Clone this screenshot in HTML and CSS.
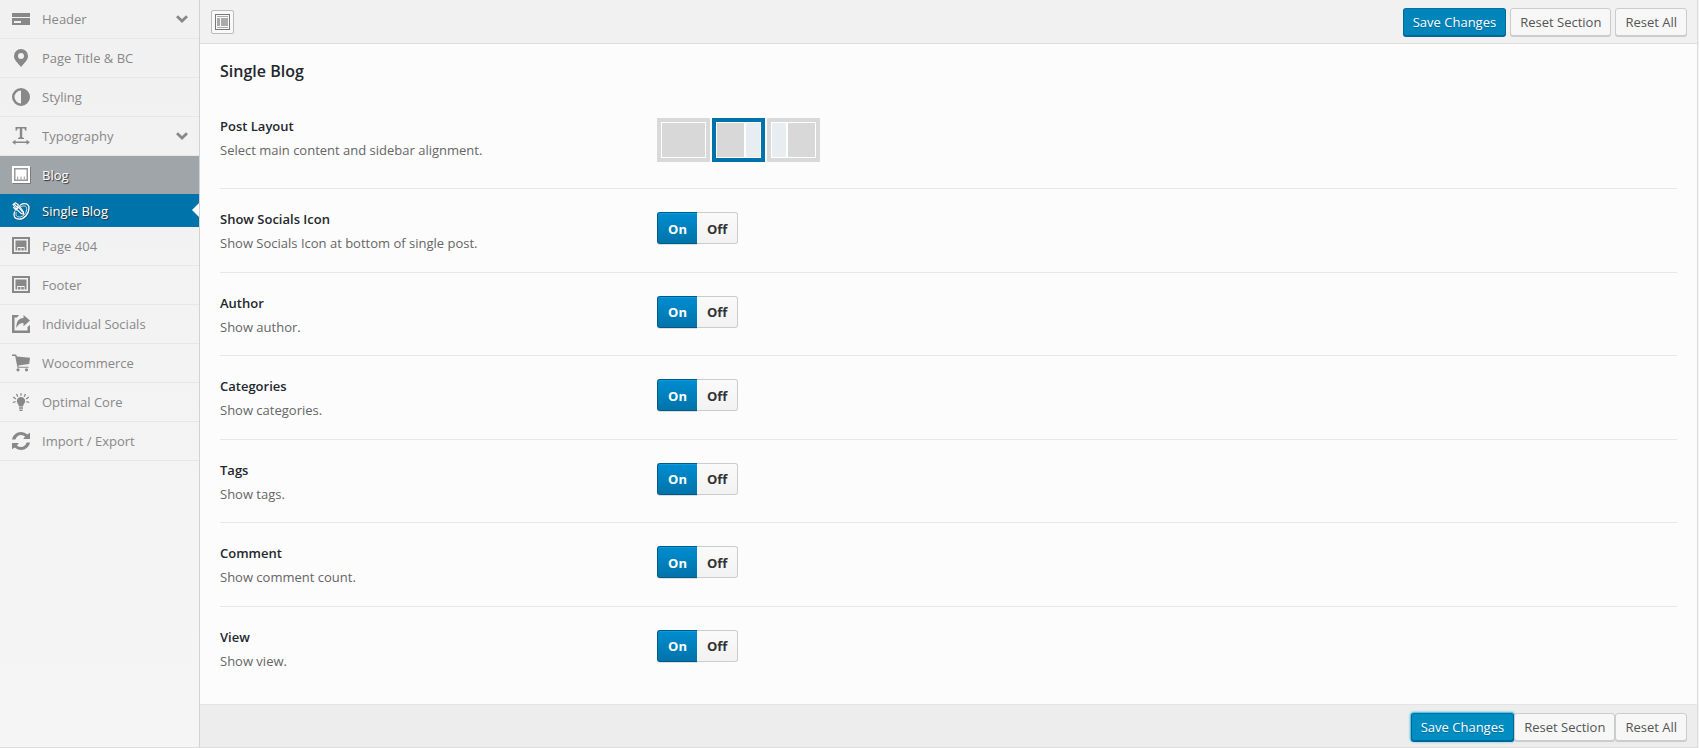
FILE: index.html
```html
<!DOCTYPE html>
<html lang="en">
<head>
<meta charset="utf-8">
<title>Theme Options</title>
<link rel="stylesheet" href="styles.css">
</head>
<body>
<svg class="sprite" aria-hidden="true">
  <symbol id="i-header" viewBox="0 0 18 18"><path fill-rule="evenodd" d="M0 3h18v4H0zM0 8h18v7H0zM2 11v2h7v-2z"/></symbol>
  <symbol id="i-pin" viewBox="0 0 18 18"><path fill-rule="evenodd" d="M9 0a7 7 0 0 0-7 7c0 2 .8 3.600 1.800 4.900L9 18l5.200-6.100C15.200 10.600 16 9 16 7a7 7 0 0 0-7-7zm0 4a3 3 0 1 1 0 6 3 3 0 0 1 0-6z"/></symbol>
  <symbol id="i-adjust" viewBox="0 0 18 18"><path fill-rule="evenodd" d="M9 0a9 9 0 1 0 0 18A9 9 0 0 0 9 0zm0 2.500v13a6.500 6.500 0 0 1 0-13z"/></symbol>
  <symbol id="i-type" viewBox="0 0 18 18"><path d="M3.500 0h11v3.500H13L12.500 1.500h-2.300V10.300L12 11v1H6v-1l1.800-.7V1.500H5.500L5 3.500H3.500zM0 15.300 3.500 12.800v1.700h11v-1.700L18 15.300l-3.500 2.500v-1.700h-11v1.700z"/></symbol>
  <symbol id="i-site" viewBox="0 0 18 18"><path fill-rule="evenodd" d="M0 0h18v17H0zM2 2v13h14V2z"/><path d="M3.500 3.500h11V10h-11zM3.500 10h1.700v3.500H3.500zM6 11h2.500v2.500H6zM9.300 11h2.500v2.500H9.300zM12.600 10h1.900v3.500h-1.900z"/></symbol>
  <symbol id="i-site-on" viewBox="0 0 18 18"><path d="M0 0h18v17H0z"/><path class="ink" fill-rule="evenodd" d="M2 2h14v13H2zM3.500 3.500v10h11v-10z"/><path class="ink" d="M5.200 10.500h1v3h-1zM8.500 10.500h1v3h-1zM11.800 10.500h1v3h-1z"/></symbol>
  <symbol id="i-sketch" viewBox="0 0 18 18"><g fill="none" stroke="currentColor" stroke-linecap="round" stroke-linejoin="round"><path stroke-width="1.300" d="M8.500 3C12 .5 17.300 1.500 17 6.500c-.3 5-4.500 10.700-10 10.700-4.500 0-6.300-4-4.300-7.500"/><path stroke-width=".8" d="M9.500 4.500c3-1.500 5.500-.3 5.200 3-.4 4-3.700 7.500-7.200 7.500-3 0-4.300-2-3.300-4.500"/><path stroke-width="1.100" d="M1 2.500 3.500.8 6.500 3l4.800 6.500.4 2.700-2.700-.8L3.800 6.500zM2.200 1.800l3 3.500M4.800 6.800 8 4.200M5.500 4l5 6M1.500 5.500 4 8.500"/></g></symbol>
  <symbol id="i-share" viewBox="0 0 18 18"><path d="M0 0h7L5 2.500H2.500v13h13V12L18 10v8H0z"/><path d="M11.500 0 18 5.500l-6.500 5.800V8C8 8 6 9.500 4.500 13 4 7 6.500 3.300 11.500 3z"/></symbol>
  <symbol id="i-cart" viewBox="0 0 18 18"><path d="M0 .5h4l1 2 13 1.300-.8 6.200L6.300 11.500l.3 1.200H16.500v1H5.500L3.200 2H0z"/><circle cx="6" cy="15.800" r="1.600"/><circle cx="14.500" cy="15.800" r="1.600"/></symbol>
  <symbol id="i-bulb" viewBox="0 0 18 18"><path d="M9 4a4.200 4.200 0 0 0-4.200 4.200C4.800 10.200 6.800 11 7 13.500h4c.2-2.500 2.200-3.300 2.200-5.300A4.200 4.200 0 0 0 9 4zM7 14.300h4v1.500H7zM7.500 16.500h3V18h-3z"/><path fill="none" stroke="currentColor" stroke-width="1.300" d="M9 2.800V.2M5.800 3.800 4.500 1M12.200 3.800 13.500 1M3.900 6 1.200 4M14.100 6l2.700-2M3.600 8.700.8 9.500M14.400 8.700l2.800.8"/></symbol>
  <symbol id="i-refresh" viewBox="0 0 18 18"><path d="M0 7.500C.8 3.200 4.500 0 9 0c2.400 0 4.600.9 6.200 2.400L18 .8V7h-6.800l1.900-2.500A6.300 6.300 0 0 0 9 2.900c-2.600 0-4.800 1.800-5.600 4.600zM18 10.500c-.8 4.300-4.500 7.500-9 7.500-2.400 0-4.600-.9-6.200-2.400L0 17.200V11h6.800l-1.900 2.500A6.300 6.300 0 0 0 9 15.100c2.600 0 4.800-1.800 5.600-4.600z"/></symbol>
  <symbol id="i-chevron" viewBox="0 0 12 8"><path fill="none" stroke="currentColor" stroke-width="2.800" d="M1 1.300 6 6l5-4.700"/></symbol>
</svg>

<form class="panel">
  <nav class="sidebar">
    <a class="item" href="#"><svg class="icon"><use href="#i-header"/></svg><span>Header</span><svg class="chevron"><use href="#i-chevron"/></svg></a>
    <a class="item" href="#"><svg class="icon"><use href="#i-pin"/></svg><span>Page Title &amp; BC</span></a>
    <a class="item" href="#"><svg class="icon"><use href="#i-adjust"/></svg><span>Styling</span></a>
    <a class="item" href="#"><svg class="icon"><use href="#i-type"/></svg><span>Typography</span><svg class="chevron"><use href="#i-chevron"/></svg></a>
    <a class="item parent" href="#"><svg class="icon"><use href="#i-site-on"/></svg><span>Blog</span></a>
    <a class="item current" href="#"><svg class="icon"><use href="#i-sketch"/></svg><span>Single Blog</span></a>
    <a class="item" href="#"><svg class="icon"><use href="#i-site"/></svg><span>Page 404</span></a>
    <a class="item" href="#"><svg class="icon"><use href="#i-site"/></svg><span>Footer</span></a>
    <a class="item" href="#"><svg class="icon"><use href="#i-share"/></svg><span>Individual Socials</span></a>
    <a class="item" href="#"><svg class="icon"><use href="#i-cart"/></svg><span>Woocommerce</span></a>
    <a class="item" href="#"><svg class="icon"><use href="#i-bulb"/></svg><span>Optimal Core</span></a>
    <a class="item" href="#"><svg class="icon"><use href="#i-refresh"/></svg><span>Import / Export</span></a>
  </nav>

  <main class="main">
    <header class="bar">
      <button class="expand" type="button" aria-label="Expand options">
        <svg viewBox="0 0 15 16"><path fill="#777" fill-rule="evenodd" d="M0 0h15v16H0zM1 1v14h13V1z"/><path fill="#aaa" d="M2 2h11v1H2zM2 4h3v8H2zM6 4h7v8H6zM2 13h11v1H2z"/></svg>
      </button>
      <div class="actions">
        <button class="btn primary" type="submit">Save Changes</button>
        <button class="btn" type="button">Reset Section</button>
        <button class="btn" type="button">Reset All</button>
      </div>
    </header>

    <section class="content">
      <h2>Single Blog</h2>
      <div class="field layout">
        <div class="label"><h3>Post Layout</h3><p>Select main content and sidebar alignment.</p></div>
        <div class="layouts">
          <label class="pick"><input type="radio" name="layout" aria-label="Full width"><span class="thumb"><i class="body"></i></span></label>
          <label class="pick"><input type="radio" name="layout" aria-label="Right sidebar" checked><span class="thumb"><i class="body"></i><i class="side"></i></span></label>
          <label class="pick"><input type="radio" name="layout" aria-label="Left sidebar"><span class="thumb"><i class="side"></i><i class="body"></i></span></label>
        </div>
      </div>
      <div class="fields">
        <div class="field"><div class="label"><h3>Show Socials Icon</h3><p>Show Socials Icon at bottom of single post.</p></div><div class="switch"><button type="button" class="on">On</button><button type="button">Off</button></div></div>
        <div class="field"><div class="label"><h3>Author</h3><p>Show author.</p></div><div class="switch"><button type="button" class="on">On</button><button type="button">Off</button></div></div>
        <div class="field"><div class="label"><h3>Categories</h3><p>Show categories.</p></div><div class="switch"><button type="button" class="on">On</button><button type="button">Off</button></div></div>
        <div class="field"><div class="label"><h3>Tags</h3><p>Show tags.</p></div><div class="switch"><button type="button" class="on">On</button><button type="button">Off</button></div></div>
        <div class="field"><div class="label"><h3>Comment</h3><p>Show comment count.</p></div><div class="switch"><button type="button" class="on">On</button><button type="button">Off</button></div></div>
        <div class="field"><div class="label"><h3>View</h3><p>Show view.</p></div><div class="switch"><button type="button" class="on">On</button><button type="button">Off</button></div></div>
      </div>
    </section>

    <footer class="bar bottom">
      <div class="actions">
        <button class="btn primary focused" type="submit">Save Changes</button>
        <button class="btn" type="button">Reset Section</button>
        <button class="btn" type="button">Reset All</button>
      </div>
    </footer>
  </main>
</form>
</body>
</html>
```
FILE: styles.css
```css
* { box-sizing: border-box; }

body {
  margin: 0;
  background: #f1f1f1;
  color: #23282d;
  font: 13px/18px "Open Sans", "Noto Sans", sans-serif;
}

h2, h3, p { margin: 0; }
button { font: inherit; }
.sprite { display: none; }

.panel {
  display: flex;
  min-height: 100vh;
  margin-right: 1px;
  border-right: 1px solid #ddd;
  border-bottom: 1px solid #ddd;
}

/* Sidebar */
.sidebar {
  flex: none;
  width: 200px;
  border-right: 1px solid #d2d2d2;
  background: linear-gradient(#f1f1f1, #f5f5f5);
}

.item {
  position: relative;
  display: flex;
  align-items: center;
  gap: 12px;
  height: 39px;
  padding: 0 11px 0 12px;
  border-bottom: 1px solid #e7e7e7;
  color: #888;
  text-decoration: none;
}

.icon { width: 18px; height: 18px; fill: currentColor; }
.chevron { width: 12px; height: 8px; margin-left: auto; }

.item.parent,
.item.current {
  border-bottom: 0;
  color: #fff;
  text-shadow: 1px 1px 1px #333;
}

.item.parent { height: 38px; background: #a0a5aa; }
.item.current { height: 33px; background: #0073aa; }
.item.parent .icon, .item.current .icon { filter: drop-shadow(1px 1px 0 #4446); }
.ink { fill: #999; }

.item.current::after {
  content: "";
  position: absolute;
  top: 9px;
  right: 0;
  border: 7px solid transparent;
  border-right-color: #fcfcfc;
  border-left: 0;
}

/* Main column */
.main {
  flex: 1;
  display: flex;
  flex-direction: column;
  min-width: 0;
  background: #fcfcfc;
}

.bar {
  display: flex;
  align-items: center;
  justify-content: space-between;
  height: 44px;
  padding: 0 10px 0 11px;
  border-bottom: 1px solid #dedede;
  background: #f1f1f1;
}

.bar.bottom {
  justify-content: flex-end;
  height: 43px;
  padding-top: 2px;
  border-top: 1px solid #e3e3e3;
  border-bottom: 0;
  background: #ededed;
}

.expand {
  display: grid;
  place-items: center;
  width: 23px;
  height: 24px;
  padding: 0;
  border: 1px solid #bbb;
  border-radius: 2px;
  background: #f9f9f9;
}

.expand svg { width: 15px; height: 16px; }

.actions { display: flex; gap: 4px; }
.bottom .actions { gap: 0; }

.btn {
  height: 28px;
  padding: 0 9px;
  border: 1px solid #ccc;
  border-radius: 3px;
  background: #f7f7f7;
  box-shadow: 0 1px 0 #ccc;
  color: #555;
}

.btn.primary {
  border-color: #0073aa #006799 #006799;
  background: #0085ba;
  box-shadow: 0 1px 0 #006799;
  color: #fff;
  text-shadow: 0 1px 1px #006799;
}

.btn.focused {
  background: #008ec2;
  box-shadow: 0 1px 0 #006799, 0 0 2px 1px #33b3db;
}

/* Fields */
.content {
  flex: 1;
  display: flex;
  flex-direction: column;
  padding: 15px 20px;
}

h2 { font-size: 16px; font-weight: 600; line-height: 24px; }
h3 { font-size: 13px; font-weight: 600; line-height: 18px; }

.field {
  display: grid;
  grid-template-columns: 30% 1fr;
  align-items: start;
  border-top: 1px solid #e7e7e7;
}

.label { padding-top: 21px; }
.label p { margin-top: 6px; color: #666; }

.fields {
  flex: 1;
  display: grid;
  grid-auto-rows: 1fr;
}

.field.layout { height: 105px; border: 0; }
.field.layout .label { padding-top: 34px; }

.layouts { display: flex; gap: 2px; padding-top: 35px; }
.pick { position: relative; }
.pick input { position: absolute; margin: 0; opacity: 0; }

.thumb {
  display: flex;
  gap: 2px;
  width: 53px;
  height: 44px;
  padding: 1px;
  border: 4px solid #d9d9d9;
  background: #fff;
}

.pick input:checked + .thumb { border-color: #0073aa; }
.body { flex: 2; background: #d8d8d8; }
.side { flex: 1; background: #e7edf0; }

.switch { display: flex; margin-top: 23px; }

.switch button {
  height: 32px;
  padding: 1px 10px 0;
  border: 1px solid #ccc;
  border-left: 0;
  border-radius: 0 3px 3px 0;
  background: linear-gradient(#fafafa, #f2f2f2);
  color: #333;
  font-weight: 700;
}

.switch .on {
  border: 1px solid #005a87;
  border-right: 0;
  border-radius: 3px 0 0 3px;
  background: linear-gradient(#008dd0, #0073aa);
  box-shadow: inset 0 1px 0 #0a9be0, 0 1px 0 #ddd;
  color: #fff;
}
```
